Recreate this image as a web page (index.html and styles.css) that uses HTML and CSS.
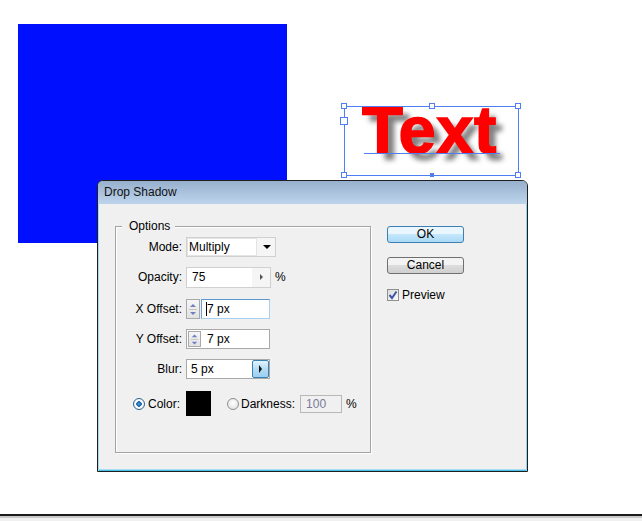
FILE: index.html
```html
<!DOCTYPE html>
<html lang="en">
<head>
    <meta charset="UTF-8">
    <title>Drop Shadow</title>
    <link rel="stylesheet" href="styles.css">
</head>
<body>
    <div class="stage">
        <div class="blue-rect"></div>

        <div class="text-obj">Text</div>
        <div class="baseline"></div>
        <div class="selection">
            <span class="handle h-tl"></span>
            <span class="handle h-tm"></span>
            <span class="handle h-tr"></span>
            <span class="handle h-bl"></span>
            <span class="handle h-br"></span>
            <span class="port"></span>
            <span class="center-dot"></span>
        </div>

        <div class="dialog">
            <div class="titlebar">Drop Shadow</div>
            <div class="dialog-body">
                <div class="group">
                    <span class="legend">Options</span>
                    <div class="rows">
                        <div class="row">
                            <span class="lbl">Mode:</span>
                            <div class="select">
                                <span class="select-value">Multiply</span>
                                <span class="arrow-down"></span>
                            </div>
                        </div>
                        <div class="row">
                            <span class="lbl">Opacity:</span>
                            <div class="numfield">
                                <span class="num-value">75</span>
                                <span class="num-btn"><span class="arrow-right"></span></span>
                            </div>
                            <span>%</span>
                        </div>
                        <div class="row row-spaced">
                            <span class="lbl">X Offset:</span>
                            <div class="spin-field">
                                <span class="spinner">
                                    <svg width="12" height="18" viewBox="0 0 12 18">
                                        <path d="M3 7 L6 4 L9 7 Z" fill="#6f7fc2"/>
                                        <path d="M2 9.5 H10" stroke="#c4c4c4" stroke-width="1"/>
                                        <path d="M3 12 L9 12 L6 15 Z" fill="#6f7fc2"/>
                                    </svg>
                                </span>
                                <span class="text-input focused"><span class="caret"></span>7 px</span>
                            </div>
                        </div>
                        <div class="row">
                            <span class="lbl">Y Offset:</span>
                            <div class="spin-field boxed">
                                <span class="spinner">
                                    <svg width="12" height="16" viewBox="0 0 12 16">
                                        <path d="M3 6 L6 3 L9 6 Z" fill="#6f7fc2"/>
                                        <path d="M2 8.5 H10" stroke="#c4c4c4" stroke-width="1"/>
                                        <path d="M3 11 L9 11 L6 14 Z" fill="#6f7fc2"/>
                                    </svg>
                                </span>
                                <span class="text-input">7 px</span>
                            </div>
                        </div>
                        <div class="row">
                            <span class="lbl">Blur:</span>
                            <div class="combo">
                                <span class="combo-value">5 px</span>
                                <span class="combo-btn"><span class="arrow-right dark"></span></span>
                            </div>
                        </div>
                        <div class="row row-spaced row-color">
                            <span class="lbl lbl-radio"><span class="radio checked"></span>Color:</span>
                            <span class="swatch"></span>
                            <span class="radio-opt"><span class="radio"></span>Darkness:</span>
                            <span class="disabled-input">100</span>
                            <span>%</span>
                        </div>
                    </div>
                </div>

                <div class="actions">
                    <button class="btn btn-default">OK</button>
                    <button class="btn btn-cancel">Cancel</button>
                    <label class="check">
                        <span class="checkbox">
                            <svg width="10" height="10" viewBox="0 0 10 10">
                                <path d="M1.5 5 L4 8 L8.5 1.5" fill="none" stroke="#3d55a8" stroke-width="2"/>
                            </svg>
                        </span>
                        Preview
                    </label>
                </div>
            </div>
        </div>
    </div>
    <div class="statusbar"></div>
</body>
</html>
```

FILE: styles.css
```css
body {
    margin: 0;
    background: #fff;
    font-family: "Liberation Sans", Arial, sans-serif;
    font-size: 12px;
    color: #000;
    overflow: hidden;
}

.stage {
    position: relative;
    height: 514px;
}

.blue-rect {
    position: absolute;
    left: 18px;
    top: 24px;
    width: 269px;
    height: 219px;
    background: #0010ff;
}

/* text object on the artboard */
.text-obj {
    position: absolute;
    left: 362px;
    top: 97px;
    font-size: 67px;
    line-height: 66px;
    font-weight: bold;
    letter-spacing: 0.5px;
    color: #ff0000;
    -webkit-text-stroke: 1.5px #ff0000;
    text-shadow: 7px 7px 5px rgba(0, 0, 0, 0.5);
}

.baseline {
    position: absolute;
    left: 364px;
    top: 153px;
    width: 136px;
    height: 1px;
    background: #4f7df2;
}

.selection {
    position: absolute;
    left: 344px;
    top: 106px;
    width: 175px;
    height: 70px;
    box-sizing: border-box;
    border: 1px solid #4f7df2;
}

.handle {
    position: absolute;
    width: 6px;
    height: 6px;
    box-sizing: border-box;
    background: #fff;
    border: 1px solid #4f7df2;
}

.h-tl { left: -4px; top: -4px; }
.h-tm { left: 84px; top: -4px; }
.h-tr { left: 170px; top: -4px; }
.h-bl { left: -4px; top: 65px; }
.h-br { left: 170px; top: 65px; }

.port {
    position: absolute;
    left: -5px;
    top: 10px;
    width: 8px;
    height: 8px;
    box-sizing: border-box;
    background: #fff;
    border: 1px solid #4f7df2;
}

.center-dot {
    position: absolute;
    left: 85px;
    top: 66px;
    width: 4px;
    height: 4px;
    background: #4f7df2;
}

/* dialog window */
.dialog {
    position: absolute;
    left: 97px;
    top: 180px;
    width: 431px;
    height: 292px;
    box-sizing: border-box;
    border: 1px solid #1f1f1f;
    border-radius: 6px 6px 0 0;
    background: #f0f0f0;
    box-shadow: inset 1px 0 #a4d9f1, inset -1px 0 #8fd3f0, inset 0 -1px #46c2ea, inset 0 -2px #a8dcf2;
    overflow: hidden;
}

.titlebar {
    height: 23px;
    line-height: 23px;
    padding-left: 6px;
    background: linear-gradient(#97b0cd, #bdd4ec);
    color: #111;
}

.dialog-body {
    display: flex;
    gap: 16px;
    padding: 22px 0 0 17px;
}

.group {
    width: 256px;
    height: 227px;
    box-sizing: border-box;
    border: 1px solid #a3a3a3;
    box-shadow: 1px 1px 0 #fff, inset 1px 1px 0 #fff;
}

.legend {
    display: block;
    width: fit-content;
    margin: -8px 0 0 6px;
    padding: 0 5px 0 7px;
    line-height: 14px;
    background: #f0f0f0;
}

.rows {
    display: flex;
    flex-direction: column;
    gap: 10px;
    margin-top: 4px;
}

.row {
    display: flex;
    align-items: center;
    gap: 4px;
    height: 20px;
}

.row-spaced {
    margin-top: 2px;
}

.row-color {
    height: 25px;
}

.lbl {
    width: 66px;
    text-align: right;
}

.lbl-radio {
    display: flex;
    justify-content: flex-end;
    align-items: center;
    gap: 3px;
    padding-right: 2px;
    box-sizing: border-box;
}

/* mode dropdown */
.select {
    width: 90px;
    height: 20px;
    box-sizing: border-box;
    border: 1px solid #d0d0d0;
    background: #f5f5f5;
    display: flex;
    align-items: center;
}

.select-value {
    width: 70px;
    height: 18px;
    box-sizing: border-box;
    border: 1px solid #e4e4e4;
    background: #fff;
    line-height: 16px;
    padding-left: 1px;
}

.arrow-down {
    margin-left: 6px;
    width: 0;
    height: 0;
    border-left: 4px solid transparent;
    border-right: 4px solid transparent;
    border-top: 4px solid #000;
}

.arrow-right {
    width: 0;
    height: 0;
    border-top: 3px solid transparent;
    border-bottom: 3px solid transparent;
    border-left: 3px solid #555;
}

.arrow-right.dark {
    border-left-color: #111;
    border-top-width: 4px;
    border-bottom-width: 4px;
}

/* opacity field */
.numfield {
    width: 85px;
    height: 21px;
    box-sizing: border-box;
    border: 1px solid #d0d0d0;
    background: #f5f5f5;
    display: flex;
}

.num-value {
    width: 65px;
    background: #fff;
    line-height: 19px;
    padding-left: 5px;
    box-sizing: border-box;
}

.num-btn {
    flex: 1;
    display: flex;
    align-items: center;
    justify-content: center;
}

/* offset fields */
.spin-field {
    display: flex;
    gap: 1px;
    height: 20px;
}

.spinner {
    width: 14px;
    height: 20px;
    box-sizing: border-box;
    border: 1px solid #a9a9a9;
    background: linear-gradient(#f6f6f6, #e2e2e2);
    display: flex;
    align-items: center;
    justify-content: center;
}

.text-input {
    width: 69px;
    height: 20px;
    box-sizing: border-box;
    background: #fff;
    padding-left: 4px;
    line-height: 18px;
    display: flex;
    align-items: center;
}

.text-input.focused {
    border: 1px solid #a8d0f0;
    border-top-color: #5d97d0;
    border-left-color: #6ba2d6;
}

.caret {
    width: 1px;
    height: 14px;
    background: #000;
}

.spin-field.boxed {
    width: 84px;
    box-sizing: border-box;
    border: 1px solid #a9a9a9;
    background: #fff;
    padding: 1px;
    gap: 0;
}

.spin-field.boxed .spinner {
    width: 13px;
    height: 16px;
}

.spin-field.boxed .text-input {
    height: 16px;
    padding-left: 6px;
}

/* blur combo */
.combo {
    width: 84px;
    height: 20px;
    box-sizing: border-box;
    border: 1px solid #a9a9a9;
    background: #fff;
    display: flex;
}

.combo-value {
    flex: 1;
    padding-left: 4px;
    line-height: 18px;
}

.combo-btn {
    width: 17px;
    box-sizing: border-box;
    border: 1px solid #3c7fb1;
    border-radius: 2px;
    background: linear-gradient(#e3f3fd, #b4dcf6 50%, #9ccff2);
    display: flex;
    align-items: center;
    justify-content: center;
}

/* colour row */
.radio {
    width: 12px;
    height: 12px;
    box-sizing: border-box;
    border-radius: 50%;
    border: 1px solid #8e8f8f;
    background: radial-gradient(circle at 50% 40%, #fff, #dcdcdc);
    display: inline-block;
}

.radio.checked {
    border-color: #2c628b;
    background: radial-gradient(circle, #3da3e0 0, #1b5fa5 2.5px, #ffffff 3px, #e6e6e6);
}

.swatch {
    width: 25px;
    height: 25px;
    background: #000;
}

.radio-opt {
    display: flex;
    align-items: center;
    gap: 2px;
    margin-left: 12px;
    margin-right: 1px;
}

.disabled-input {
    width: 42px;
    height: 18px;
    box-sizing: border-box;
    border: 1px solid #b8b8b8;
    background: #f0f0f0;
    color: #7a7a98;
    padding-left: 5px;
    line-height: 16px;
}

/* buttons */
.actions {
    display: flex;
    flex-direction: column;
    align-items: flex-start;
    width: 77px;
}

.btn {
    width: 77px;
    height: 17px;
    padding: 0;
    font-family: inherit;
    font-size: 12px;
    line-height: 15px;
    color: #000;
    border: 1px solid #707070;
    border-radius: 3px;
    background: linear-gradient(#f3f3f3 50%, #dddddd 50%, #cfcfcf);
}

.btn-default {
    border-color: #3c7fb1;
    background: linear-gradient(#eaf6fd 50%, #c4e7fc 50%, #a9daf6);
}

.btn-cancel {
    margin-top: 14px;
}

.check {
    margin-top: 14px;
    display: flex;
    align-items: center;
    gap: 3px;
}

.checkbox {
    width: 12px;
    height: 12px;
    box-sizing: border-box;
    border: 1px solid #8f8f8f;
    background: linear-gradient(135deg, #dcdcdc, #fafafa);
    display: flex;
    align-items: center;
    justify-content: center;
}

.statusbar {
    height: 5px;
    border-top: 2px solid #1a1a1a;
    background: linear-gradient(#c8c8c8 0, #c8c8c8 2px, #f0f0f0 2px);
}
```
